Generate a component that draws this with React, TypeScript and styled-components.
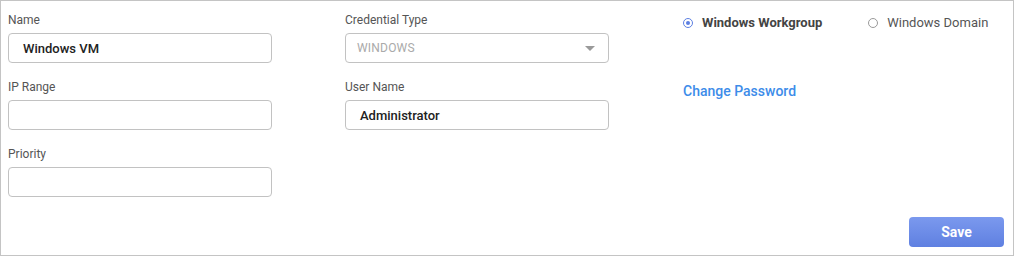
import styled, { createGlobalStyle } from 'styled-components';

const GlobalStyle = createGlobalStyle`
  body {
    margin: 0;
    background: #fff;
    font-family: Roboto, "Liberation Sans", Arial, sans-serif;
  }
`;

const Panel = styled.div`
  width: 1014px;
  height: 256px;
  box-sizing: border-box;
  border: 1px solid #c4c4c4;
  padding: 11px 9px 0 7px;
  display: flex;
  flex-direction: column;
`;

const FormRow = styled.div`
  display: flex;
  gap: 73px;
`;

const Column = styled.div`
  width: 264px;
  display: flex;
  flex-direction: column;
  gap: 16px;
`;

const Field = styled.div`
  display: flex;
  flex-direction: column;
  gap: 5px;
`;

const Label = styled.label`
  font-size: 12px;
  line-height: 16px;
  color: #555;
`;

const Input = styled.div`
  height: 30px;
  box-sizing: border-box;
  border: 1px solid #c2c2c2;
  border-radius: 4px;
  padding: 0 14px;
  display: flex;
  align-items: center;
  font-size: 13px;
  font-weight: 500;
  color: #222;
`;

const Select = styled(Input)`
  justify-content: space-between;
  padding: 0 13px 0 11px;
  font-size: 12px;
  font-weight: 400;
  color: #aaa;
  letter-spacing: 0.2px;
`;

const Caret = styled.span`
  width: 0;
  height: 0;
  border-left: 5px solid transparent;
  border-right: 5px solid transparent;
  border-top: 5px solid #9a9a9a;
`;

const SideColumn = styled.div`
  margin-left: 1px;
  display: flex;
  flex-direction: column;
`;

const RadioGroup = styled.div`
  display: flex;
  gap: 46px;
  padding-top: 3px;
`;

const RadioOption = styled.div<{ checked?: boolean }>`
  display: flex;
  align-items: center;
  gap: 9px;
  font-size: 13px;
  line-height: 16px;
  font-weight: ${p => (p.checked ? 700 : 400)};
  color: ${p => (p.checked ? '#444' : '#555')};
`;

const RadioDot = styled.span<{ checked?: boolean }>`
  width: 10px;
  height: 10px;
  box-sizing: border-box;
  border-radius: 50%;
  border: 1px solid ${p => (p.checked ? '#5c7fe2' : '#9a9a9a')};
  display: flex;
  align-items: center;
  justify-content: center;

  &::after {
    content: '';
    width: 4px;
    height: 4px;
    border-radius: 50%;
    background: ${p => (p.checked ? '#5c7fe2' : 'transparent')};
  }
`;

const Link = styled.a`
  margin-top: 52px;
  font-size: 14px;
  font-weight: 500;
  color: #3d8ce9;
  text-decoration: none;
  cursor: pointer;
`;

const Footer = styled.div`
  display: flex;
  justify-content: flex-end;
  margin-top: 20px;
`;

const SaveButton = styled.button`
  width: 95px;
  height: 30px;
  border: none;
  border-radius: 4px;
  background: linear-gradient(#7b99ee, #5f80e1);
  color: #fff;
  font-family: inherit;
  font-size: 14px;
  font-weight: 700;
  cursor: pointer;
`;

const App = () => {
  return (
    <>
      <GlobalStyle />
      <Panel>
        <FormRow>
          <Column>
            <Field>
              <Label>Name</Label>
              <Input>Windows VM</Input>
            </Field>
            <Field>
              <Label>IP Range</Label>
              <Input />
            </Field>
            <Field>
              <Label>Priority</Label>
              <Input />
            </Field>
          </Column>
          <Column>
            <Field>
              <Label>Credential Type</Label>
              <Select>
                WINDOWS
                <Caret />
              </Select>
            </Field>
            <Field>
              <Label>User Name</Label>
              <Input>Administrator</Input>
            </Field>
          </Column>
          <SideColumn>
            <RadioGroup>
              <RadioOption checked>
                <RadioDot checked />
                Windows Workgroup
              </RadioOption>
              <RadioOption>
                <RadioDot />
                Windows Domain
              </RadioOption>
            </RadioGroup>
            <Link>Change Password</Link>
          </SideColumn>
        </FormRow>
        <Footer>
          <SaveButton>Save</SaveButton>
        </Footer>
      </Panel>
    </>
  );
};

export default App;
